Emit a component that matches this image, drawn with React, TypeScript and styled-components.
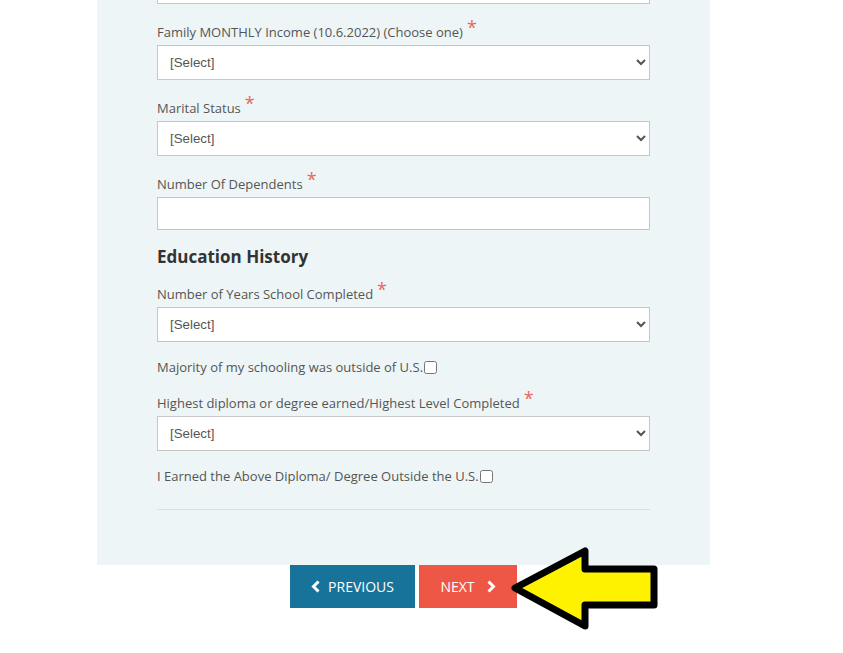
import React from "react";
import styled, { createGlobalStyle } from "styled-components";

const GlobalStyle = createGlobalStyle`
  html, body {
    margin: 0;
    padding: 0;
    background: #ffffff;
  }
  body {
    font-family: "Open Sans", "Liberation Sans", Arial, sans-serif;
    overflow: hidden;
  }
`;

const Page = styled.div`
  position: relative;
  width: 843px;
  height: 653px;
  overflow: hidden;
`;

const Panel = styled.div`
  width: 613px;
  margin: -29px 0 0 97px;
  padding: 0 60px 55px;
  box-sizing: border-box;
  background: #eef5f7;
  display: flex;
  flex-direction: column;
`;

const Field = styled.div<{ $after?: number }>`
  display: flex;
  flex-direction: column;
  margin-bottom: ${(p) => p.$after ?? 18}px;
`;

const Label = styled.label`
  display: block;
  height: 20px;
  font-size: 13px;
  line-height: 20px;
  color: #555555;
  margin-bottom: 3px;
`;

const Required = styled.span`
  color: #e8675a;
  font-size: 18px;
  line-height: 0;
  margin-left: 4px;
  position: relative;
  top: -3px;
`;

const Select = styled.select`
  height: 35px;
  width: 100%;
  box-sizing: border-box;
  border: 1px solid #c6c6c6;
  border-radius: 0;
  background: #ffffff;
  padding: 0 8px;
  font-family: "Liberation Sans", Arial, sans-serif;
  font-size: 13.3px;
  color: #555555;
  outline: none;
`;

const TextInput = styled.input`
  height: 33px;
  width: 100%;
  box-sizing: border-box;
  border: 1px solid #c6c6c6;
  border-radius: 0;
  background: #ffffff;
  padding: 0 12px;
  font-size: 13px;
  outline: none;
`;

const SectionTitle = styled.h3`
  margin: 15px 0 15px;
  height: 24px;
  font-size: 17px;
  line-height: 24px;
  font-weight: 700;
  color: #333333;
`;

const CheckRow = styled.label<{ $after?: number }>`
  display: flex;
  align-items: center;
  height: 20px;
  font-size: 13px;
  line-height: 20px;
  color: #555555;
  margin-top: -3px;
  margin-bottom: ${(p) => p.$after ?? 16}px;
`;

const Check = styled.input`
  width: 13px;
  height: 13px;
  margin: 0 0 0 1px;
`;

const Divider = styled.hr`
  border: 0;
  border-top: 1px solid #dcdfe0;
  margin: 0;
`;

const ButtonRow = styled.div`
  display: flex;
  justify-content: center;
  gap: 4px;
  width: 613px;
  margin-left: 97px;
`;

const NavButton = styled.button<{ $variant: "prev" | "next"; $width: number }>`
  display: flex;
  align-items: center;
  justify-content: center;
  gap: ${(p) => (p.$variant === "prev" ? 8 : 12)}px;
  width: ${(p) => p.$width}px;
  height: 43px;
  border: 0;
  border-radius: 0;
  padding: 0;
  background: ${(p) => (p.$variant === "prev" ? "#18739a" : "#ee5745")};
  color: #ffffff;
  font-family: "Open Sans", "Liberation Sans", Arial, sans-serif;
  font-size: 14px;
  text-transform: uppercase;
  cursor: pointer;
`;

const Pointer = styled.svg`
  position: absolute;
  left: 500px;
  top: 540px;
`;

function Chevron({ dir }: { dir: "left" | "right" }) {
  const pts = dir === "left" ? "7.5,1.5 2.5,6.5 7.5,11.5" : "1.5,1.5 6.5,6.5 1.5,11.5";
  return (
    <svg width="9" height="13" viewBox="0 0 9 13">
      <polyline
        points={pts}
        fill="none"
        stroke="#ffffff"
        strokeWidth="3"
        strokeLinejoin="miter"
      />
    </svg>
  );
}

function SelectField({ label, after }: { label: string; after?: number }) {
  return (
    <Field $after={after}>
      <Label>
        {label}
        <Required>*</Required>
      </Label>
      <Select defaultValue="">
        <option value="">[Select]</option>
      </Select>
    </Field>
  );
}

export default function App() {
  return (
    <Page>
      <GlobalStyle />
      <Panel>
        <Field>
          <TextInput type="text" />
        </Field>
        <SelectField label="Family MONTHLY Income (10.6.2022) (Choose one)" />
        <SelectField label="Marital Status" />
        <Field $after={0}>
          <Label>
            Number Of Dependents
            <Required>*</Required>
          </Label>
          <TextInput type="text" />
        </Field>

        <SectionTitle>Education History</SectionTitle>

        <SelectField label="Number of Years School Completed" />
        <CheckRow>
          Majority of my schooling was outside of U.S.
          <Check type="checkbox" />
        </CheckRow>
        <SelectField label="Highest diploma or degree earned/Highest Level Completed" />
        <CheckRow $after={23}>
          I Earned the Above Diploma/ Degree Outside the U.S.
          <Check type="checkbox" />
        </CheckRow>
        <Divider />
      </Panel>

      <ButtonRow>
        <NavButton $variant="prev" $width={125}>
          <Chevron dir="left" />
          Previous
        </NavButton>
        <NavButton $variant="next" $width={98}>
          Next
          <Chevron dir="right" />
        </NavButton>
      </ButtonRow>

      <Pointer width="170" height="100" viewBox="0 0 170 100">
        <polygon
          points="15,48 85,11 85,29 154,29 154,65 85,65 85,86"
          fill="#fff200"
          stroke="#000000"
          strokeWidth="7"
          strokeLinejoin="round"
        />
      </Pointer>
    </Page>
  );
}
